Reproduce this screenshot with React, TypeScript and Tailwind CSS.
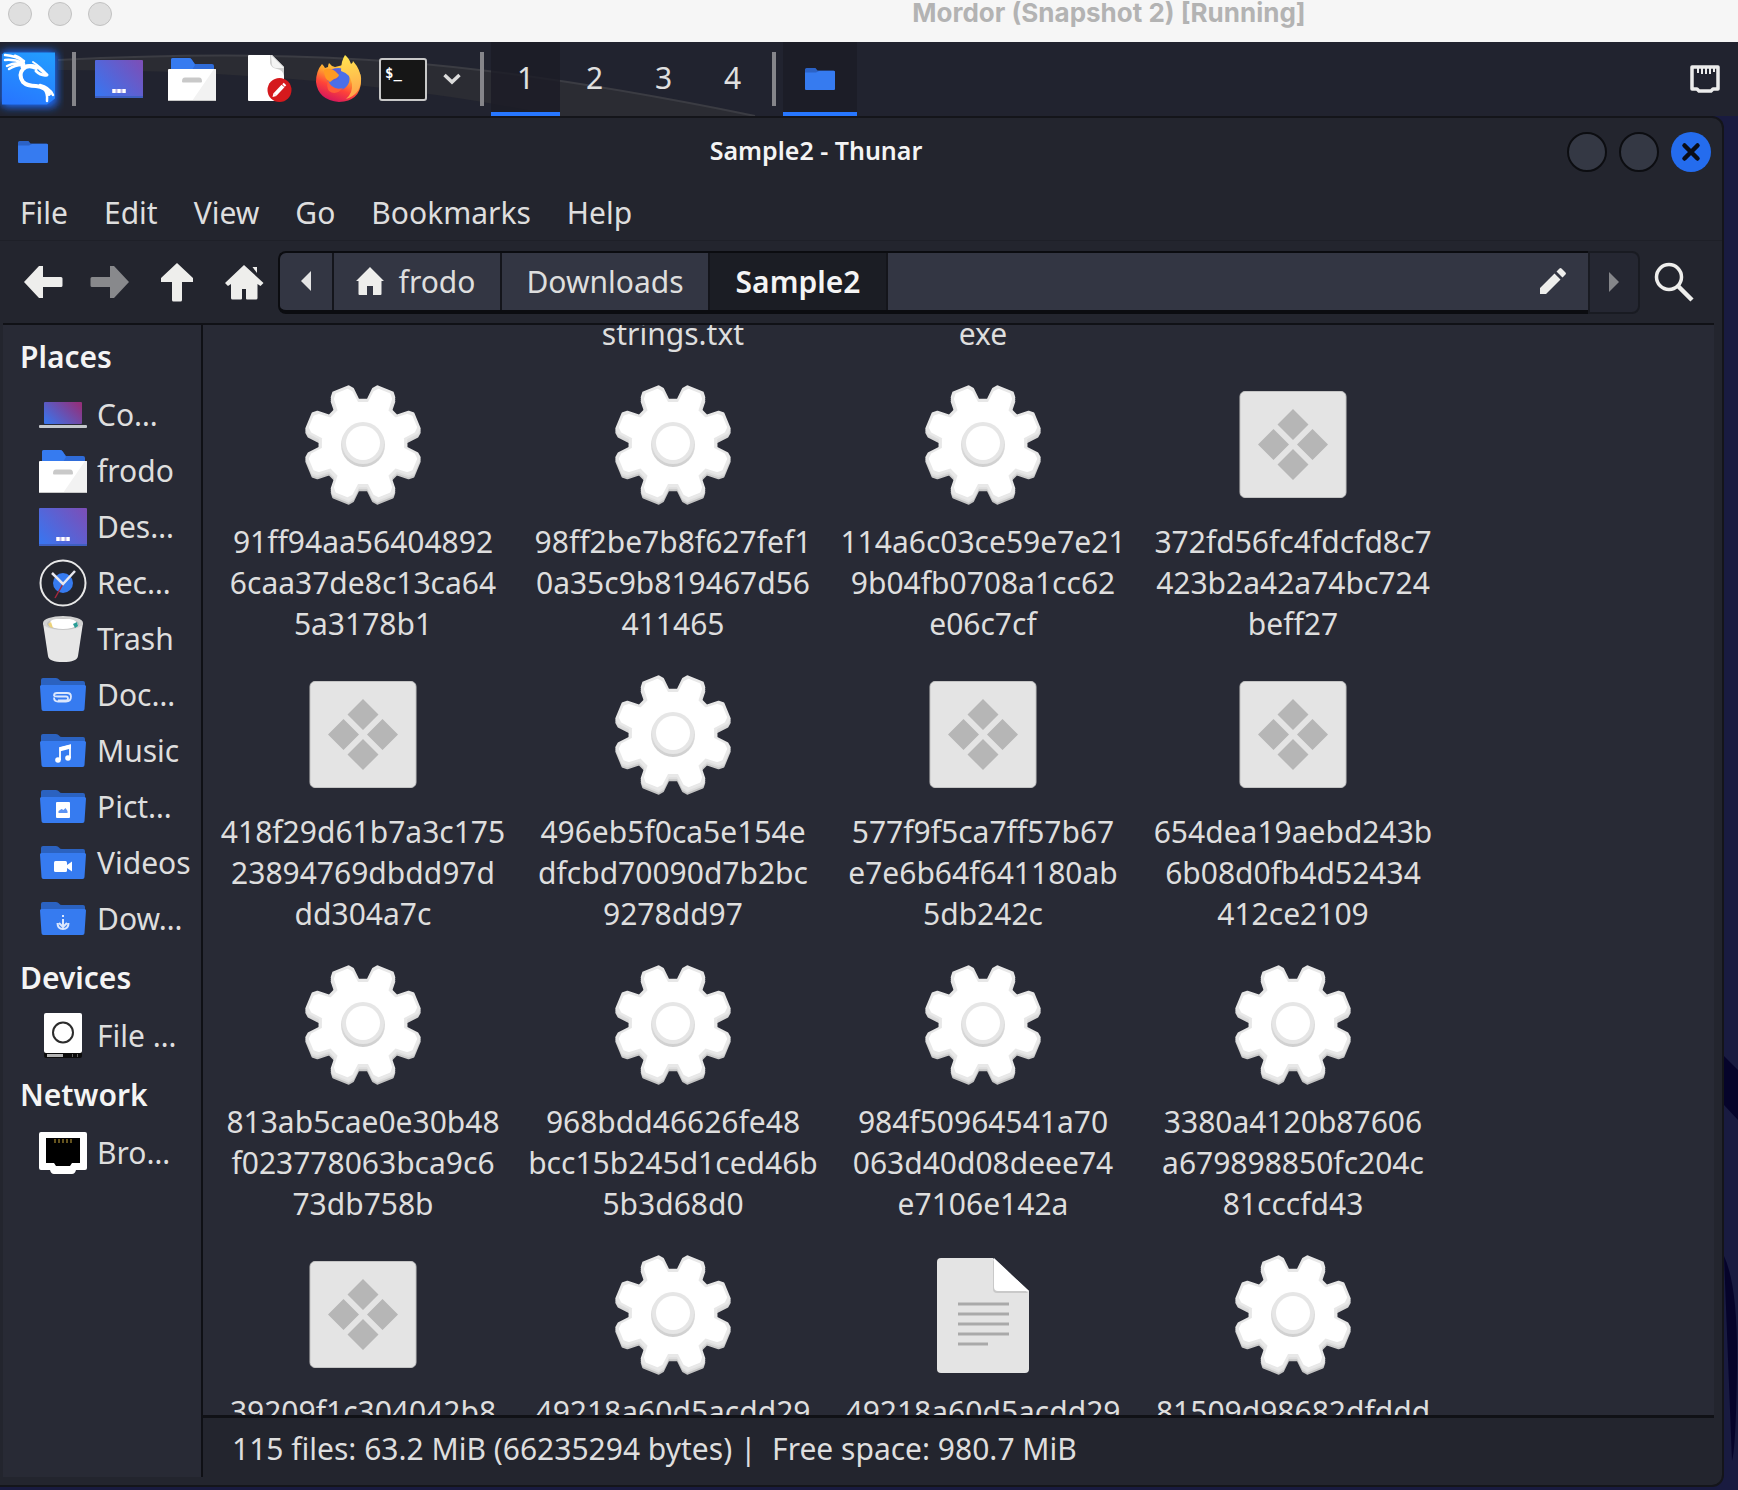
import React from "react";

/* ---------- geometry helpers ---------- */

function gearPath(cx: number, cy: number, tip: number, root: number, inset: number) {
  const pt = (r: number, deg: number) => {
    const a = (deg * Math.PI) / 180;
    return `${(cx + r * Math.cos(a)).toFixed(1)} ${(cy + r * Math.sin(a)).toFixed(1)}`;
  };
  let d = "";
  for (let i = 0; i < 8; i++) {
    const a = 22.5 + i * 45;
    d += `${i === 0 ? "M" : "L"}${pt(root, a - 16 + inset)}L${pt(tip - 3, a - 11.5 + inset)}L${pt(tip, a - 8 + inset)}L${pt(tip, a + 8 - inset)}L${pt(tip - 3, a + 11.5 - inset)}L${pt(root, a + 16 - inset)}`;
  }
  return d + "Z";
}

const GEAR_OUTER = gearPath(64, 62, 58, 43, 0);
const GEAR_INNER = gearPath(64, 62, 55, 40, 2);

/* ---------- file icons ---------- */

function GearIcon() {
  return (
    <svg viewBox="0 0 128 128" className="size-32" aria-hidden="true">
      <defs>
        <linearGradient id="gearSide" x1="0" y1="0" x2="0" y2="1">
          <stop offset="0" stopColor="#e8e8e8" />
          <stop offset="1" stopColor="#c2c2c2" />
        </linearGradient>
        <linearGradient id="gearRing" x1="0" y1="0" x2="0" y2="1">
          <stop offset="0" stopColor="#e9e9e9" />
          <stop offset="1" stopColor="#cfcfcf" />
        </linearGradient>
      </defs>
      <path d={GEAR_OUTER} transform="translate(0 4)" fill="url(#gearSide)" stroke="url(#gearSide)" strokeWidth="3" strokeLinejoin="round" />
      <path d={GEAR_OUTER} transform="translate(0 2)" fill="#dedede" stroke="#dedede" strokeWidth="3" strokeLinejoin="round" />
      <path d={GEAR_OUTER} fill="#e8e8e8" stroke="#e8e8e8" strokeWidth="3" strokeLinejoin="round" />
      <path d={GEAR_INNER} fill="#fff" stroke="#fff" strokeWidth="3" strokeLinejoin="round" />
      <circle cx="64" cy="64" r="22" fill="url(#gearRing)" />
      <circle cx="64" cy="62" r="21" fill="#e6e6e6" />
      <circle cx="64" cy="62" r="17" fill="#fff" />
    </svg>
  );
}

function BinaryIcon() {
  return (
    <svg viewBox="0 0 128 128" className="size-32" aria-hidden="true">
      <rect x="11" y="10.500" width="106" height="106" rx="5" fill="#e4e4e4" stroke="#c4c4c4" strokeWidth="1" />
      <path fill="#b6b6b6" d="M64 28l15.500 15.500L64 59 48.500 43.500zM64 68l15.500 15.500L64 99 48.500 83.500zM44.500 48L60 63.500 44.500 79 29 63.500zM83.500 48L99 63.500 83.500 79 68 63.500z" />
    </svg>
  );
}

function TextIcon() {
  return (
    <svg viewBox="0 0 128 128" className="size-32" aria-hidden="true">
      <path d="M22 7h52l36 33v78a4 4 0 0 1-4 4H22a4 4 0 0 1-4-4V11a4 4 0 0 1 4-4z" fill="#e4e4e4" />
      <path d="M74 9v29q0 4 4 4h31z" fill="#c9c9c9" />
      <path d="M75 7v29q0 4 4 4h31z" fill="#fff" />
      <path d="M39 53h51M39 63h51M39 73h51M39 83h51M39 93h30" stroke="#a9a9a9" strokeWidth="3" />
    </svg>
  );
}

/* ---------- folder icons ---------- */

function SmallFolder() {
  return (
    <svg viewBox="0 0 32 24" className="h-6 w-8" aria-hidden="true">
      <path d="M1 2.500A1.500 1.500 0 0 1 2.500 1h9l2 2.500h16A1.500 1.500 0 0 1 31 5v5H1z" fill="#2b62c6" />
      <path d="M1 5.500h11l3-1.500h15a1 1 0 0 1 1 1v17a1 1 0 0 1-1 1H2a1 1 0 0 1-1-1z" fill="#367bf0" />
    </svg>
  );
}

function PlaceFolder({ children }: { children: React.ReactNode }) {
  return (
    <svg viewBox="0 0 48 48" className="size-12" aria-hidden="true">
      <path d="M2 9a2 2 0 0 1 2-2h13q2 0 3 1.500T23 10h21a2 2 0 0 1 2 2v6H2z" fill="#2b62c0" />
      <path d="M1 15.500q0-1.500 1.500-1.500h43q1.500 0 1.500 1.500L45.500 38q0 2-2 2h-39q-2 0-2-2z" fill="#367bf0" />
      {children}
    </svg>
  );
}

function HomeFolder() {
  return (
    <svg viewBox="0 0 48 48" className="size-12" aria-hidden="true">
      <path d="M3 5a2 2 0 0 1 2-2h16q2 0 3 2l3 4h17a2 2 0 0 1 2 2v8H3z" fill="#2f6bd8" />
      <path d="M3 5a2 2 0 0 1 2-2h16q2 0 3 2l3 5-3 5H3z" fill="#367bf0" />
      <rect x="0" y="14" width="48" height="32" rx="1" fill="#fff" />
      <path d="M46 14h1a1 1 0 0 1 1 1v30a1 1 0 0 1-1 1H24z" fill="#f2f2f2" />
      <path d="M0 45h48a1 1 0 0 1-1 1H1a1 1 0 0 1-1-1z" fill="#c9c9c9" />
      <path d="M14 26.500q0-4 3-4h14q3 0 3 4 0 1-1 1H15q-1 0-1-1z" fill="#c9c9c9" />
    </svg>
  );
}

function DesktopIcon() {
  return (
    <svg viewBox="0 0 48 48" className="size-12" aria-hidden="true">
      <defs>
        <linearGradient id="desk" x1="0" y1="0.800" x2="1" y2="0.100">
          <stop offset="0" stopColor="#3b74ee" />
          <stop offset="1" stopColor="#7b4fb8" />
        </linearGradient>
      </defs>
      <rect x="0" y="5" width="48" height="38" rx="1" fill="url(#desk)" />
      <path d="M0 41h48v1a1 1 0 0 1-1 1H1a1 1 0 0 1-1-1z" fill="#3e5fc0" />
      <path d="M17 34h14v4H17z" fill="#b9b0e8" />
      <path d="M17.500 34h3v4h-3zM22.500 34h3v4h-3zM27.500 34h3v4h-3z" fill="#fff" />
    </svg>
  );
}

/* ---------- side pane icons ---------- */

function ComputerIcon() {
  return (
    <svg viewBox="0 0 48 48" className="size-12" aria-hidden="true">
      <defs>
        <linearGradient id="comp" x1="0" y1="0.800" x2="1" y2="0.200">
          <stop offset="0" stopColor="#3c72e8" />
          <stop offset="1" stopColor="#93307c" />
        </linearGradient>
      </defs>
      <rect x="5" y="11" width="38" height="22" rx="1" fill="url(#comp)" />
      <rect x="0" y="34" width="48" height="3" rx="1" fill="#c4c8cc" />
    </svg>
  );
}

function RecentIcon() {
  return (
    <svg viewBox="0 0 48 48" className="size-12" aria-hidden="true">
      <circle cx="24" cy="24" r="22.500" fill="#23252e" stroke="#e8e8e8" strokeWidth="2" />
      <circle cx="24" cy="24" r="10" fill="#367bf0" />
      <path d="M24 25l-8 14" stroke="#a3283c" strokeWidth="1.500" />
      <path d="M13 14l11 11 12-13" fill="none" stroke="#e8e8f0" strokeWidth="2.500" />
    </svg>
  );
}

function TrashIcon() {
  return (
    <svg viewBox="0 0 48 48" className="size-12" aria-hidden="true">
      <path d="M4 8h40l-5 33q-1 6-15 6T9 41z" fill="#e6e6e6" />
      <ellipse cx="24" cy="8" rx="20" ry="7" fill="#d2d2d2" />
      <ellipse cx="24" cy="9" rx="16" ry="5.500" fill="#bdbdbd" />
      <path d="M10 10q1-6 7-6h14q7 1 8 6-5 4-15 4t-14-4z" fill="#fff" />
      <path d="M9 9l3-2 2 6-3-1z" fill="#ecd27a" />
      <path d="M34 9l4-2 1 4-3 2z" fill="#2a9d96" />
    </svg>
  );
}

function DriveIcon() {
  return (
    <svg viewBox="0 0 48 48" className="size-12" aria-hidden="true">
      <rect x="5" y="28" width="38" height="18" rx="2" fill="#0c0c0c" />
      <rect x="5" y="1" width="38" height="40" rx="2" fill="#fff" />
      <circle cx="24" cy="20.500" r="10" fill="none" stroke="#2c2c2c" strokeWidth="2" />
      <path d="M8 42h16v3H8z" fill="#b4b4b4" />
      <path d="M33 42h1v3h-1zM38 42h1v3h-1z" fill="#666" />
    </svg>
  );
}

function NetworkIcon() {
  return (
    <svg viewBox="0 0 48 48" className="size-12" aria-hidden="true">
      <path d="M2 3h44a2 2 0 0 1 2 2v34q0 2-2 2h-9q-1 4-4 4H15q-3 0-4-4H2q-2 0-2-2V5a2 2 0 0 1 2-2z" fill="#fff" />
      <path d="M7 9h34v25h-8l-2 3H17l-2-3H7z" fill="#000" />
      <path d="M16 10v4M20 10v4M24 10v4M28 10v4M32 10v4" stroke="#c9a63c" strokeWidth="1" />
    </svg>
  );
}

/* ---------- panel icons ---------- */

function KaliIcon() {
  return (
    <svg viewBox="0 0 64 74" className="h-[74px] w-16" aria-hidden="true">
      <defs>
        <linearGradient id="kali" x1="0.700" y1="0" x2="0.300" y2="1">
          <stop offset="0" stopColor="#239bff" />
          <stop offset="1" stopColor="#2777ff" />
        </linearGradient>
        <filter id="kaliGlow" x="-30%" y="-30%" width="160%" height="160%">
          <feGaussianBlur stdDeviation="4" />
        </filter>
      </defs>
      <rect x="1" y="9" width="56" height="56" rx="6" fill="#1f6dff" filter="url(#kaliGlow)" />
      <path d="M4 10.500h51v46l-8 6H2v-50z" fill="url(#kali)" />
      <g fill="none" stroke="#fff" strokeLinecap="round" strokeLinejoin="round">
        <path d="M5 13q11 1 19 6M5 18q9-1 18 3M7 24q8-4 15-2M9 27q6-4 13-4" strokeWidth="2.500" />
        <path d="M15 14q6 2 8 6t-1 5" strokeWidth="3" />
        <path d="M36 26q-8-4-13 1-5 6 0 13 4 4 13 4 10 1 13 8" strokeWidth="4" />
        <path d="M26 24q9-2 14 3l7 6q-6 1-11-4" strokeWidth="3" />
        <path d="M33 20q8 5 14 13" strokeWidth="2" />
        <path d="M40 43q9 2 13 10M43 45q5 6 4 14" strokeWidth="2.500" />
      </g>
    </svg>
  );
}

function EditorIcon() {
  return (
    <svg viewBox="0 0 48 50" className="h-[50px] w-12" aria-hidden="true">
      <path d="M3 1h23l12 12v34H3a1 1 0 0 1-1-1V2a1 1 0 0 1 1-1z" fill="#fff" />
      <path d="M24 1h2l12 12v9q-1-6-7-7-6-1-7-6z" fill="#d0d0d0" />
      <path d="M25 1l13 13h-8q-3 0-4-3z" fill="#f4f4f4" />
      <circle cx="33.500" cy="36" r="12" fill="#d5191d" />
      <path d="M29 40.500l8-8.500" stroke="#fff" strokeWidth="4" />
      <path d="M37.500 31.500l1.500-1.500" stroke="#fff" strokeWidth="3.500" />
      <path d="M26.500 43l1-4 3 3z" fill="#fff" />
    </svg>
  );
}

function FirefoxIcon() {
  return (
    <svg viewBox="0 0 48 50" className="h-[50px] w-12" aria-hidden="true">
      <defs>
        <linearGradient id="foxBody" x1="0.800" y1="0.050" x2="0.350" y2="1">
          <stop offset="0" stopColor="#ffe14f" />
          <stop offset="0.350" stopColor="#ffa52f" />
          <stop offset="0.650" stopColor="#ff4438" />
          <stop offset="1" stopColor="#d4145e" />
        </linearGradient>
        <linearGradient id="foxFlame" x1="0.500" y1="0" x2="0.600" y2="1">
          <stop offset="0" stopColor="#ffe350" />
          <stop offset="1" stopColor="#ffa04a" />
        </linearGradient>
      </defs>
      <path d="M7 10q2 2 3 4l3-1q0-2 1-4 2 3 6 4l12-3 8 3q7 6 6 15-1 19-22 20Q3 46 1 28 1 17 7 10z" fill="url(#foxBody)" />
      <circle cx="23.500" cy="25" r="11" fill="#4a6fe8" />
      <path d="M14 16q6-3 13 0l-4 5 1 4q-5 2-9 2z" fill="#5a5fd8" />
      <path d="M30 1q4 3 6 9 2-1 2-3 8 9 8 19-1 15-15 19 7-6 6-15-1-10-11-13 0-10 4-16z" fill="url(#foxFlame)" />
      <path d="M9 16q6-3 11 1l4 4q-1 3-5 4l-4 3q-6-3-6-12z" fill="#ff9a22" />
      <path d="M13 26q4 11 15 8-7 8-14 3-3-4-1-11z" fill="#ff5c38" />
    </svg>
  );
}

function TerminalIcon() {
  return (
    <div className="flex h-[43px] w-12 items-start rounded-[3px] border-2 border-[#c8c8c8] bg-[#161616] pt-1 pl-1 font-['DejaVu_Sans_Mono',monospace] text-[14px] leading-[18px] font-bold text-white">
      $_
    </div>
  );
}

function TrayNetworkIcon() {
  return (
    <svg viewBox="0 0 32 28" className="h-7 w-8" aria-hidden="true">
      <path d="M3 2h26v22h-5l-2 2H10l-2-2H3z" fill="none" stroke="#ececec" strokeWidth="3.500" strokeLinejoin="round" />
      <path d="M9 3v5M13 3v6M17 3v6M21 3v6M25 3v4" stroke="#ececec" strokeWidth="2" />
    </svg>
  );
}

/* ---------- toolbar icons ---------- */

function BackIcon() {
  return (
    <svg viewBox="0 0 40 40" className="size-10" aria-hidden="true">
      <path d="M1 20L16 4h4v11h18q1.500 0 1.500 1.500v7q0 1.500-1.500 1.500H20v11h-4z" fill="#eeeeec" />
    </svg>
  );
}

function ForwardIcon() {
  return (
    <svg viewBox="0 0 40 40" className="size-10" aria-hidden="true">
      <path d="M39 20L24 4h-4v11H2q-1.500 0-1.500 1.500v7Q.5 25 2 25h18v11h4z" fill="#88898c" />
    </svg>
  );
}

function UpIcon() {
  return (
    <svg viewBox="0 0 40 40" className="size-10" aria-hidden="true">
      <path d="M20 1L4 16v4h11v18q0 1.500 1.500 1.500h7q1.500 0 1.500-1.500V20h11v-4z" fill="#eeeeec" />
    </svg>
  );
}

function HouseIcon() {
  return (
    <svg viewBox="0 0 40 40" className="size-10" aria-hidden="true">
      <path d="M20 3L1 21l3 3 3-2v14q0 1.500 1.500 1.500H17q1 0 1-1V27h4v9.500q0 1 1 1h9q1.500 0 1.500-1.500V22l3 2 3-3zM28.500 5H33v6z" fill="#eeeeec" />
    </svg>
  );
}

function SmallHouseIcon() {
  return (
    <svg viewBox="0 0 30 30" className="size-[30px]" aria-hidden="true">
      <path d="M15 1L1 15h2.500v13q0 1 1 1H12v-9h6v9h7.500q1 0 1-1V15H29z" fill="#eeeeec" />
    </svg>
  );
}

function PencilIcon() {
  return (
    <svg viewBox="0 0 28 28" className="size-7" aria-hidden="true">
      <path d="M1 27v-6L15.500 6.500l6 6L7 27zM17.500 4.500L20.500 1.500q1-1 2 0l4 4q1 1 0 2l-3 3z" fill="#eeeeec" />
    </svg>
  );
}

function SearchIcon() {
  return (
    <svg viewBox="0 0 40 40" className="size-10" aria-hidden="true">
      <circle cx="15" cy="15" r="12.500" fill="none" stroke="#eeeeec" strokeWidth="3.500" />
      <path d="M24 24l14 14" stroke="#eeeeec" strokeWidth="4.500" />
    </svg>
  );
}

/* ---------- data ---------- */

type Kind = "gear" | "binary" | "text";

const files: { kind: Kind; lines: string[] }[] = [
  { kind: "gear", lines: ["91ff94aa56404892", "6caa37de8c13ca64", "5a3178b1"] },
  { kind: "gear", lines: ["98ff2be7b8f627fef1", "0a35c9b819467d56", "411465"] },
  { kind: "gear", lines: ["114a6c03ce59e7e21", "9b04fb0708a1cc62", "e06c7cf"] },
  { kind: "binary", lines: ["372fd56fc4fdcfd8c7", "423b2a42a74bc724", "beff27"] },
  { kind: "binary", lines: ["418f29d61b7a3c175", "23894769dbdd97d", "dd304a7c"] },
  { kind: "gear", lines: ["496eb5f0ca5e154e", "dfcbd70090d7b2bc", "9278dd97"] },
  { kind: "binary", lines: ["577f9f5ca7ff57b67", "e7e6b64f641180ab", "5db242c"] },
  { kind: "binary", lines: ["654dea19aebd243b", "6b08d0fb4d52434", "412ce2109"] },
  { kind: "gear", lines: ["813ab5cae0e30b48", "f023778063bca9c6", "73db758b"] },
  { kind: "gear", lines: ["968bdd46626fe48", "bcc15b245d1ced46b", "5b3d68d0"] },
  { kind: "gear", lines: ["984f50964541a70", "063d40d08deee74", "e7106e142a"] },
  { kind: "gear", lines: ["3380a4120b87606", "a679898850fc204c", "81cccfd43"] },
  { kind: "binary", lines: ["39209f1c304042b8"] },
  { kind: "gear", lines: ["49218a60d5acdd29"] },
  { kind: "text", lines: ["49218a60d5acdd29"] },
  { kind: "gear", lines: ["81509d98682dfddd"] },
];

const places: { label: string; icon: React.ReactNode }[] = [
  { label: "Co…", icon: <ComputerIcon /> },
  { label: "frodo", icon: <HomeFolder /> },
  { label: "Des…", icon: <DesktopIcon /> },
  { label: "Rec…", icon: <RecentIcon /> },
  { label: "Trash", icon: <TrashIcon /> },
  {
    label: "Doc…",
    icon: (
      <PlaceFolder>
        <path d="M19 30h8q2 0 2-2t-2-2h-8q-4 0-4-1 0-2.500 3-2.500h10q4 0 4 3.500 0 5-5 5h-8q-4 0-4-4" transform="translate(0 -0.500)" fill="none" stroke="#dbe7fd" strokeWidth="1.800" />
      </PlaceFolder>
    ),
  },
  {
    label: "Music",
    icon: (
      <PlaceFolder>
        <path d="M21 33V21l10-2.500V31" fill="none" stroke="#fff" strokeWidth="1.800" />
        <path d="M20.500 20.500L32 17.500v4l-11.500 3z" fill="#fff" />
        <circle cx="19" cy="33" r="2.800" fill="#fff" />
        <circle cx="29" cy="31" r="2.800" fill="#fff" />
      </PlaceFolder>
    ),
  },
  {
    label: "Pict…",
    icon: (
      <PlaceFolder>
        <rect x="17" y="19" width="14" height="16" rx="1" fill="#fff" />
        <path d="M19.500 30v-2l3-2 2 1 2-2 2 3v2z" fill="#5c93f4" />
      </PlaceFolder>
    ),
  },
  {
    label: "Videos",
    icon: (
      <PlaceFolder>
        <rect x="15" y="22" width="13" height="11" rx="1.500" fill="#fff" />
        <path d="M28 26l5-3.500v10L28 29z" fill="#fff" />
      </PlaceFolder>
    ),
  },
  {
    label: "Dow…",
    icon: (
      <PlaceFolder>
        <path d="M24 20v2M24 24v8M20 28l4 4 4-4M18.500 28q0 6 5.500 6t5.500-6" fill="none" stroke="#dbe7fd" strokeWidth="2" />
      </PlaceFolder>
    ),
  },
];

/* ---------- parts ---------- */

function FileIcon({ kind }: { kind: Kind }) {
  if (kind === "gear") return <GearIcon />;
  if (kind === "binary") return <BinaryIcon />;
  return <TextIcon />;
}

function PlaceRow({ label, icon }: { label: string; icon: React.ReactNode }) {
  return (
    <li>
      <a href="#" className="flex h-14 items-center gap-[10px] pl-9 whitespace-nowrap">
        {icon}
        <span className="pb-px">{label}</span>
      </a>
    </li>
  );
}

function SideHeading({ children }: { children: React.ReactNode }) {
  return <h2 className="flex h-[61px] items-center pl-[17px] font-semibold text-[#f4f4f4]">{children}</h2>;
}

function Separator() {
  return <span className="h-[54px] w-1 shrink-0 bg-[#85858a]" />;
}

function Panel() {
  return (
    <div className="relative flex h-[74px] shrink-0 items-center bg-[#21232f] text-[#e0e0e0]">
      <svg viewBox="0 0 760 74" className="absolute top-0 left-0 h-[74px] w-[760px]" aria-hidden="true">
        <path d="M58 18Q250 8 400 20T755 74H560Q330 28 58 28z" fill="#2b2c33" />
        <path d="M58 18Q250 8 400 20T755 74" fill="none" stroke="#3b3c43" strokeWidth="2" />
      </svg>
      <div className="relative flex flex-1 items-center">
        <button type="button" aria-label="Applications" className="w-[72px]">
          <KaliIcon />
        </button>
        <Separator />
        <button type="button" aria-label="Show desktop" className="ml-[19px]">
          <DesktopIcon />
        </button>
        <button type="button" aria-label="Files" className="ml-[25px]">
          <HomeFolder />
        </button>
        <button type="button" aria-label="Text editor" className="ml-[30px]">
          <EditorIcon />
        </button>
        <button type="button" aria-label="Firefox" className="ml-[21px]">
          <FirefoxIcon />
        </button>
        <button type="button" aria-label="Terminal" className="ml-4">
          <TerminalIcon />
        </button>
        <button type="button" aria-label="More terminals" className="ml-4">
          <svg viewBox="0 0 18 12" className="h-3 w-[18px]" aria-hidden="true">
            <path d="M1.500 2L9 9l7.500-7" fill="none" stroke="#dcdcdc" strokeWidth="3.500" />
          </svg>
        </button>
        <span className="ml-[19px] flex">
          <Separator />
        </span>
        <div className="mr-[5px] ml-[7px] flex">
          <button type="button" className="h-[74px] w-[69px] border-b-4 border-[#2777ff] bg-[#1c1c26]/80">1</button>
          <button type="button" className="w-[69px] pb-1">2</button>
          <button type="button" className="w-[69px] pb-1">3</button>
          <button type="button" className="w-[69px] pb-1">4</button>
        </div>
        <Separator />
        <button type="button" aria-label="Sample2 - Thunar" className="ml-[7px] flex h-[74px] w-[74px] items-center justify-center border-b-4 border-[#2777ff] bg-[#1c1d27] pt-1">
          <SmallFolder />
        </button>
      </div>
      <button type="button" aria-label="Network" className="relative mr-[17px]">
        <TrayNetworkIcon />
      </button>
    </div>
  );
}

function TitleBar() {
  return (
    <div className="grid h-[66px] shrink-0 grid-cols-[1fr_auto_1fr] items-center pr-[11px] pl-[17px]">
      <SmallFolder />
      <h1 className="pr-24 pb-[3px] text-[25px] font-semibold text-[#f4f4f4]">Sample2 - Thunar</h1>
      <div className="flex justify-end gap-3">
        <button type="button" aria-label="Minimize" className="size-10 rounded-full border-2 border-[#0c0d11] bg-[#343844]" />
        <button type="button" aria-label="Maximize" className="size-10 rounded-full border-2 border-[#0c0d11] bg-[#343844]" />
        <button type="button" aria-label="Close" className="flex size-10 items-center justify-center rounded-full bg-[#246cee]">
          <svg viewBox="0 0 20 20" className="size-5" aria-hidden="true">
            <path d="M3.500 3.500l13 13M16.500 3.500l-13 13" stroke="#0a0d18" strokeWidth="4.500" strokeLinecap="round" />
          </svg>
        </button>
      </div>
    </div>
  );
}

function ToolBar() {
  return (
    <div className="flex h-[83px] shrink-0 items-center border-t border-[#1e2028] pr-[28px] pl-[23px]">
      <div className="flex gap-[27px]">
        <button type="button" aria-label="Back"><BackIcon /></button>
        <button type="button" aria-label="Forward"><ForwardIcon /></button>
        <button type="button" aria-label="Up"><UpIcon /></button>
        <button type="button" aria-label="Home"><HouseIcon /></button>
      </div>
      <div className="ml-[14px] flex h-[63px] flex-1">
        <div className="flex flex-1 rounded-l-lg border-t-2 border-b-4 border-l-2 border-[#0b0c10] bg-[#333643]">
          <button type="button" aria-label="Scroll left" className="flex w-[52px] items-center justify-center">
            <svg viewBox="0 0 12 22" className="h-[22px] w-3" aria-hidden="true"><path d="M11 1v20L1 11z" fill="#e4e4e4" /></svg>
          </button>
          <button type="button" className="flex w-[168px] items-center justify-center gap-[14px] border-l-2 border-[#14151b] pr-1">
            <SmallHouseIcon />
            <span>frodo</span>
          </button>
          <button type="button" className="w-[208px] border-l-2 border-[#14151b]">Downloads</button>
          <button type="button" className="w-[180px] border-x-2 border-[#14151b] bg-[#1b1d24] font-semibold text-[#f4f4f4]">Sample2</button>
          <button type="button" aria-label="Edit location" className="flex flex-1 items-center justify-end pr-[21px]">
            <PencilIcon />
          </button>
        </div>
        <button type="button" aria-label="Scroll right" className="flex w-[52px] items-center justify-center rounded-r-lg border-2 border-[#191b22] bg-[#252732]">
          <svg viewBox="0 0 12 22" className="h-[22px] w-3" aria-hidden="true"><path d="M1 1v20l10-10z" fill="#85868a" /></svg>
        </button>
      </div>
      <button type="button" aria-label="Search" className="ml-[14px]"><SearchIcon /></button>
    </div>
  );
}

function SidePane() {
  return (
    <nav aria-label="Side pane" className="w-[200px] shrink-0 overflow-hidden border-r-2 border-[#0f1015] bg-[#282a35] pt-px">
      <SideHeading>Places</SideHeading>
      <ul>
        {places.map((p) => (
          <PlaceRow key={p.label} {...p} />
        ))}
      </ul>
      <SideHeading>Devices</SideHeading>
      <ul>
        <PlaceRow label="File …" icon={<DriveIcon />} />
      </ul>
      <SideHeading>Network</SideHeading>
      <ul>
        <PlaceRow label="Bro…" icon={<NetworkIcon />} />
      </ul>
    </nav>
  );
}

function FileView() {
  return (
    <main className="min-h-0 flex-1 overflow-hidden bg-[#282a35] pl-[5px]">
      <div className="-mt-3 mb-[27px] grid grid-cols-[repeat(auto-fill,310px)] text-center leading-[41px]">
        <span />
        <span>strings.txt</span>
        <span>exe</span>
      </div>
      <ul className="grid grid-cols-[repeat(auto-fill,310px)] gap-y-[27px]">
        {files.map((f, i) => (
          <li key={i} className="flex flex-col items-center gap-3">
            <FileIcon kind={f.kind} />
            <p className="text-center leading-[41px] whitespace-nowrap">
              {f.lines.map((line) => (
                <span key={line} className="block">{line}</span>
              ))}
            </p>
          </li>
        ))}
      </ul>
    </main>
  );
}

export default function App() {
  return (
    <div className="flex h-screen flex-col overflow-hidden bg-[#191b40] font-['Noto_Sans',sans-serif] text-[30px] leading-[41px] text-[#dedede]">
      <header className="relative flex h-[42px] shrink-0 justify-center bg-[#f6f6f6]">
        <div className="absolute top-[2px] left-2 flex gap-4">
          <span className="size-6 rounded-full border border-[#c2c2c2] bg-[#dfdfdf]" />
          <span className="size-6 rounded-full border border-[#c2c2c2] bg-[#dfdfdf]" />
          <span className="size-6 rounded-full border border-[#c2c2c2] bg-[#dfdfdf]" />
        </div>
        <p className="pl-[480px] font-['Inter',sans-serif] text-[26px] leading-[26px] font-bold text-[#b3b3b3]">Mordor (Snapshot 2) [Running]</p>
      </header>
      <Panel />
      <div className="relative flex min-h-0 flex-1 pb-[3px]">
        <svg viewBox="0 0 14 1374" preserveAspectRatio="none" className="absolute top-0 right-0 h-full w-[14px]" aria-hidden="true">
          <path d="M0 940l14 14v50l-14-15zM0 1140q14 30 13 110T8 1345z" fill="#06042a" />
        </svg>
        <section className="relative mr-[14px] flex min-w-0 flex-1 flex-col rounded-tr-xl rounded-br-xl border-t-2 border-r-2 border-b-2 border-[#14151a] bg-[#23252e] pt-px">
          <TitleBar />
          <nav aria-label="Menu bar" className="flex h-[55px] shrink-0 items-center gap-9 pl-5">
            <button type="button">File</button>
            <button type="button">Edit</button>
            <button type="button">View</button>
            <button type="button">Go</button>
            <button type="button">Bookmarks</button>
            <button type="button">Help</button>
          </nav>
          <ToolBar />
          <div className="mr-2 mb-2 ml-[3px] flex min-h-0 flex-1 border-t-2 border-[#101116]">
            <SidePane />
            <div className="flex min-w-0 flex-1 flex-col">
              <FileView />
              <footer className="flex h-[62px] shrink-0 items-center border-t-[3px] border-[#101116] bg-[#23252e] pt-[2px] pl-[29px]">
                115 files: 63.2 MiB (66235294 bytes) |&nbsp; Free space: 980.7 MiB
              </footer>
            </div>
          </div>
        </section>
      </div>
    </div>
  );
}
